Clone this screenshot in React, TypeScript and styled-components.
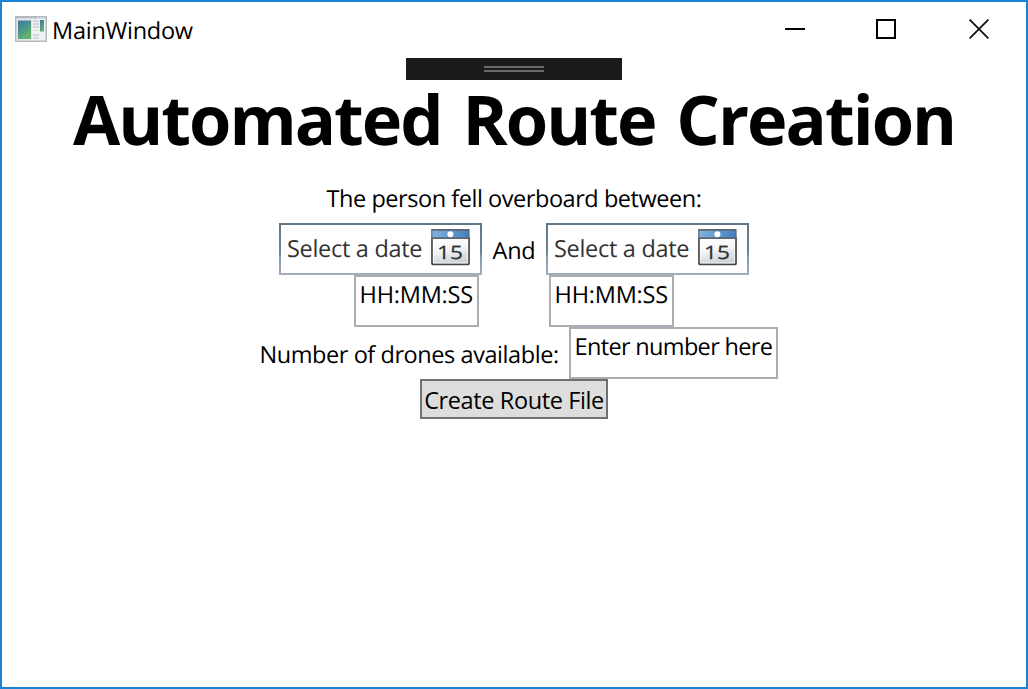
import React from 'react';
import styled, { createGlobalStyle } from 'styled-components';

const GlobalStyle = createGlobalStyle`
  body {
    margin: 0;
    background: #fff;
  }
  *, *::before, *::after {
    box-sizing: border-box;
  }
`;

const Window = styled.div`
  position: relative;
  display: flex;
  flex-direction: column;
  width: 100%;
  height: 100vh;
  border: 2px solid #1883d7;
  background: #fff;
  color: #000;
  font-family: 'Open Sans', 'Noto Sans', sans-serif;
  font-size: 23.5px;
  line-height: 32px;
  white-space: nowrap;
  text-rendering: geometricPrecision;
  overflow: hidden;
`;

const TitleBar = styled.header`
  display: flex;
  align-items: center;
  height: 56px;
  padding-left: 13px;
`;

const WindowTitle = styled.span`
  flex: 1;
  margin-left: 5px;
  letter-spacing: -0.25px;
`;

const Controls = styled.div`
  display: flex;
  gap: 71px;
  height: 54px;
  padding-right: 37px;
  align-self: flex-start;
`;

const ControlButton = styled.button<{ $nudge?: number }>`
  display: flex;
  align-items: center;
  justify-content: center;
  margin-right: ${({ $nudge = 0 }) => $nudge}px;
  padding: 0;
  border: 0;
  background: transparent;
`;

const DebugBar = styled.div`
  position: absolute;
  top: 56px;
  left: 404px;
  display: flex;
  flex-direction: column;
  align-items: center;
  justify-content: center;
  gap: 2px;
  width: 216px;
  height: 22px;
  background: #1b1b1b;
`;

const Grip = styled.span`
  width: 60px;
  height: 2px;
  background: #686868;
`;

const Content = styled.main`
  display: flex;
  flex-direction: column;
  align-items: center;
`;

const Heading = styled.h1`
  margin: 0;
  padding-top: 16px;
  font-size: 68.5px;
  font-weight: 700;
  line-height: 92px;
  letter-spacing: -1.98px;
  word-spacing: 5px;
`;

const Prompt = styled.p`
  margin: 16px 0 9px;
  letter-spacing: -0.45px;
`;

const Row = styled.div<{ $gap?: number }>`
  display: flex;
  gap: ${({ $gap = 0 }) => $gap}px;
  height: 52px;
`;

const DatePicker = styled.div`
  display: flex;
  justify-content: space-between;
  width: 203px;
  padding: 4px 10px 0 6px;
  border: 2px solid;
  border-image: linear-gradient(
      #617584 0,
      #718597 62.5%,
      #8399a9 62.5%,
      #a3aebb 100%
    )
    2;
`;

const Placeholder = styled.span`
  padding-top: 3px;
  color: #333;
  letter-spacing: -0.3px;
`;

const Conjunction = styled.span`
  width: 64px;
  padding-top: 11px;
  text-align: center;
  letter-spacing: -0.2px;
`;

const TextBox = styled.div<{ $width: number; $tracking: number }>`
  width: ${({ $width }) => $width}px;
  padding: 1px 0 0 3.6px;
  border: 2px solid #abadb3;
  letter-spacing: ${({ $tracking }) => $tracking}px;
`;

const Label = styled.span`
  width: 319px;
  padding: 11px 0 0 9.5px;
  letter-spacing: -0.43px;
`;

const CreateButton = styled.button`
  width: 188px;
  height: 40px;
  padding: 2px 0 0;
  border: 2px solid #707070;
  background: #ddd;
  color: #000;
  font: inherit;
  letter-spacing: -0.39px;
`;

const AppIcon = () => (
  <svg width="32" height="28" viewBox="0 0 32 28">
    <defs>
      <linearGradient id="pane" x1="0" y1="0" x2="0.5" y2="1">
        <stop offset="0" stopColor="#4477a0" />
        <stop offset="0.45" stopColor="#46918f" />
        <stop offset="1" stopColor="#62b568" />
      </linearGradient>
    </defs>
    <rect x="0.75" y="0.75" width="30.5" height="24.5" fill="#f1f2f4" stroke="#b4b8be" strokeWidth="1.5" />
    <path d="M1 1H31V2.5H1z" fill="#b4bac3" />
    <path d="M22 1h2v1h-2zM25 1h2v1h-2zM28 1h2v1h-2z" fill="#e4e8ee" />
    <rect x="2" y="3.5" width="15" height="20.5" fill="#dfe4e6" />
    <rect x="3" y="4.5" width="13" height="18.5" fill="url(#pane)" />
    <path d="M18 5h6M18 8h6M18 11h6M18 19h6M18 22h6" stroke="#c9cdd2" strokeWidth="1.4" />
    <path d="M18 14.5h12" stroke="#dde0e4" strokeWidth="1" />
    <rect x="25" y="4" width="4" height="11.5" fill="url(#pane)" />
  </svg>
);

const CalendarIcon = ({ id }: { id: string }) => (
  <svg width="39" height="37" viewBox="0 0 39 37">
    <defs>
      <linearGradient id={`${id}-head`} x1="0" y1="0" x2="1" y2="0">
        <stop offset="0" stopColor="#80b2de" />
        <stop offset="1" stopColor="#4480bd" />
      </linearGradient>
      <linearGradient id={`${id}-page`} x1="0" y1="0" x2="0.25" y2="1">
        <stop offset="0" stopColor="#fff" />
        <stop offset="0.5" stopColor="#f6f7f8" />
        <stop offset="1" stopColor="#cfd4d8" />
      </linearGradient>
    </defs>
    <rect x="1" y="8" width="37" height="27.4" rx="1" fill={`url(#${id}-page)`} stroke="#414345" strokeWidth="1.7" />
    <path d="M2.4 10V34H36.6V10" fill="none" stroke="#fff" strokeWidth="0.9" opacity="0.8" />
    <rect x="0.2" y="0" width="38.4" height="10" fill="#5d666e" />
    <rect x="1.4" y="1.7" width="36" height="6.6" fill={`url(#${id}-head)`} />
    <circle cx="19.4" cy="5.2" r="3" fill="#fff" />
    <text
      x="6"
      y="29.8"
      fontFamily="'Open Sans', sans-serif"
      fontSize="18.5"
      fontWeight="400"
      fill="#303030"
      stroke="#303030"
      strokeWidth="0.25"
      textLength="26"
      lengthAdjust="spacingAndGlyphs"
    >
      15
    </text>
  </svg>
);

export default function App() {
  return (
    <Window>
      <GlobalStyle />
      <TitleBar>
        <AppIcon />
        <WindowTitle>MainWindow</WindowTitle>
        <Controls>
          <ControlButton aria-label="Minimize">
            <svg width="20" height="20" viewBox="0 0 20 20">
              <path d="M0 10H20" stroke="#000" strokeWidth="2" />
            </svg>
          </ControlButton>
          <ControlButton aria-label="Maximize" $nudge={2}>
            <svg width="20" height="20" viewBox="0 0 20 20">
              <rect x="1" y="1" width="18" height="18" fill="none" stroke="#000" strokeWidth="2" />
            </svg>
          </ControlButton>
          <ControlButton aria-label="Close">
            <svg width="20" height="20" viewBox="0 0 20 20">
              <path d="M0.6 0.6L19.4 19.4M19.4 0.6L0.6 19.4" stroke="#111" strokeWidth="1.8" />
            </svg>
          </ControlButton>
        </Controls>
      </TitleBar>
      <Content>
        <Heading>Automated Route Creation</Heading>
        <Prompt>The person fell overboard between:</Prompt>
        <Row>
          <DatePicker>
            <Placeholder>Select a date</Placeholder>
            <CalendarIcon id="from" />
          </DatePicker>
          <Conjunction>And</Conjunction>
          <DatePicker>
            <Placeholder>Select a date</Placeholder>
            <CalendarIcon id="to" />
          </DatePicker>
        </Row>
        <Row $gap={70}>
          <TextBox $width={125} $tracking={-0.22}>HH:MM:SS</TextBox>
          <TextBox $width={125} $tracking={-0.22}>HH:MM:SS</TextBox>
        </Row>
        <Row>
          <Label>Number of drones available:</Label>
          <TextBox $width={209} $tracking={-0.67}>Enter number here</TextBox>
        </Row>
        <CreateButton>Create Route File</CreateButton>
      </Content>
      <DebugBar>
        <Grip />
        <Grip />
      </DebugBar>
    </Window>
  );
}
